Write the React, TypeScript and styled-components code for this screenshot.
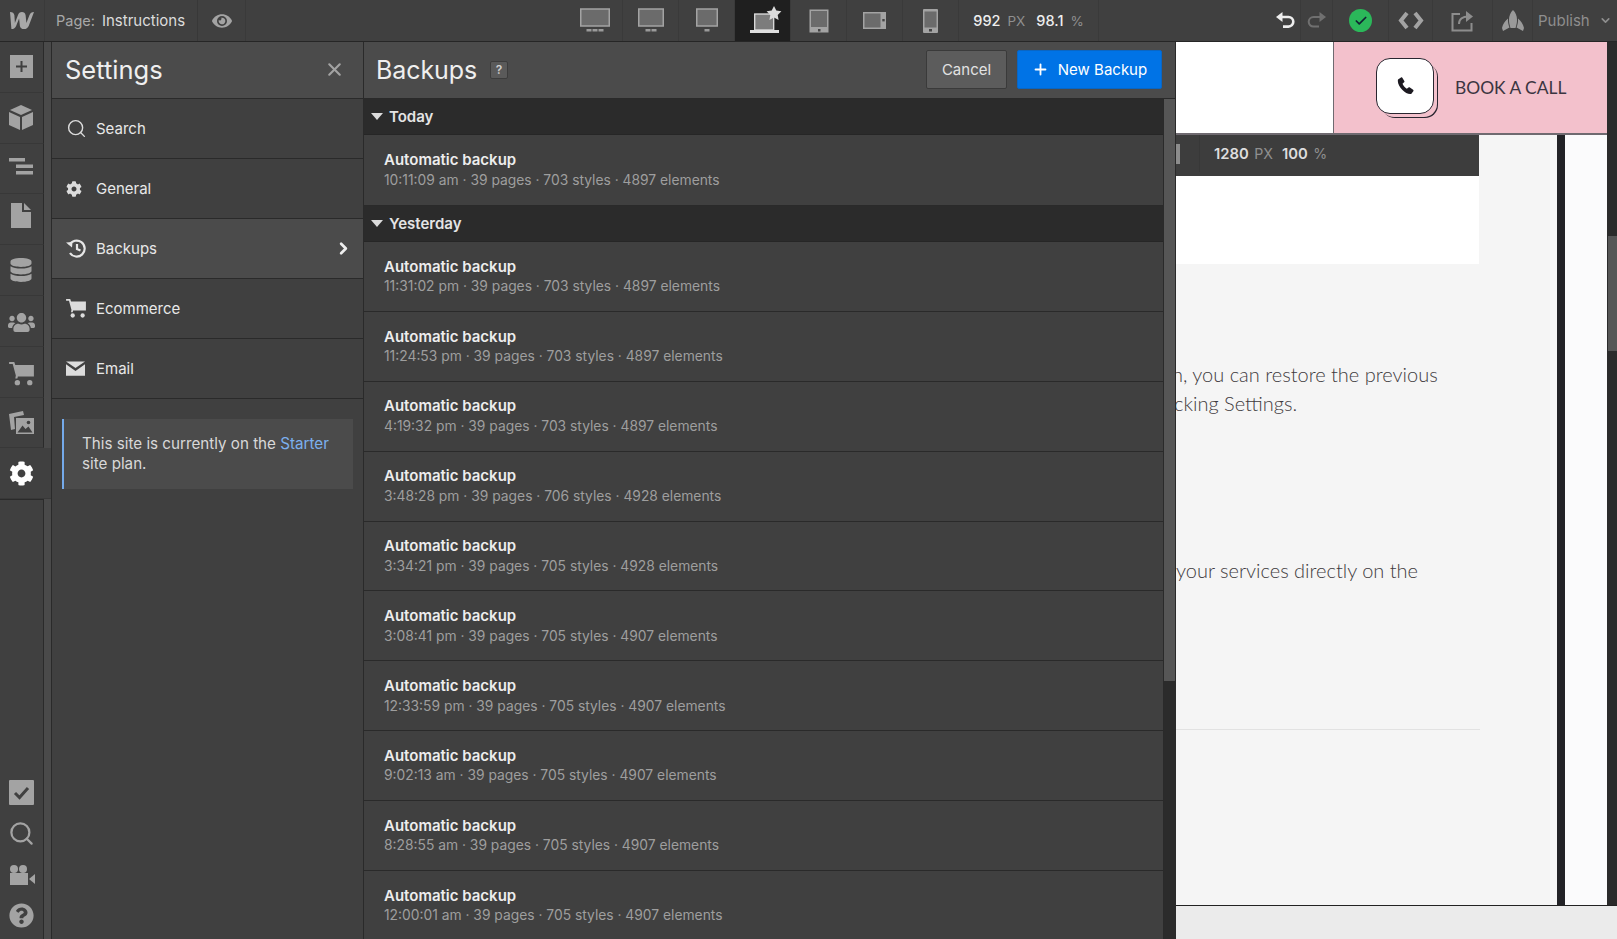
import React from 'react';
import styled, { createGlobalStyle } from 'styled-components';
import { FaCog, FaDatabase, FaEye, FaQuestionCircle, FaUsers } from 'react-icons/fa';
import { Check, X, ChevronRight, ChevronDown, Plus, Search } from 'lucide-react';

const GlobalStyle = createGlobalStyle`
  html, body { margin: 0; height: 100%; overflow: hidden; background: #404040; }
  * { box-sizing: border-box; }
  body { font-family: Inter, "Noto Sans", "Liberation Sans", sans-serif; }
`;

const gray = '#a3a3a3';

const Screen = styled.div`
  display: flex;
  flex-direction: column;
  width: 1617px;
  height: 939px;
  overflow: hidden;
  background: #404040;
  color: #e6e6e6;
`;

/* top bar */
const TopBar = styled.header`
  display: flex;
  align-items: stretch;
  height: 42px;
  flex: none;
  background: #404040;
  border-bottom: 1px solid #262626;
`;

const LogoCell = styled.div`
  width: 45px;
  flex: none;
  display: flex;
  align-items: center;
  justify-content: center;
  padding-right: 2px;
  border-right: 1px solid #3a3a3a;
`;

const PageCrumb = styled.div`
  width: 153px;
  flex: none;
  display: flex;
  align-items: center;
  gap: 7px;
  padding-left: 11px;
  font-size: 14.5px;
  color: #a8a8a8;
  border-right: 1px solid #383838;
  b { font-weight: 400; font-size: 15px; color: #dcdcdc; }
`;

const BarCell = styled.div<{ $w: number; $active?: boolean; $ml?: number }>`
  width: ${(p) => p.$w}px;
  margin-left: ${(p) => p.$ml ?? 0}px;
  flex: none;
  display: flex;
  align-items: center;
  justify-content: center;
  color: ${gray};
  background: ${(p) => (p.$active ? '#1f1f1f' : 'transparent')};
  border-right: 1px solid #3a3a3a;
`;

const Readout = styled.div`
  display: flex;
  align-items: center;
  gap: 7px;
  font-size: 14.5px;
  font-weight: 500;
  color: #eee;
  white-space: nowrap;
  span { font-size: 13.5px; color: #8f8f8f; font-weight: 400; margin-right: 4px; }
  span:last-child { margin-right: 0; }
`;

const PublishCell = styled.div`
  flex: none;
  display: flex;
  align-items: center;
  gap: 9px;
  padding-left: 5px;
  font-size: 15px;
  color: #8e8e8e;
`;

const SavedDot = styled.div`
  width: 23px;
  height: 23px;
  border-radius: 50%;
  background: #2bb85a;
  display: flex;
  align-items: center;
  justify-content: center;
  color: #123;
`;

/* body */
const Workspace = styled.div`
  flex: 1;
  min-height: 0;
  display: flex;
`;

const Rail = styled.nav`
  width: 52px;
  flex: none;
  display: flex;
  flex-direction: column;
  justify-content: space-between;
  background: #4a4a4a;
  border-right: 1px solid #2a2a2a;
`;

const RailGroup = styled.div`
  display: flex;
  flex-direction: column;
`;

const RailCell = styled.div<{ $active?: boolean; $up?: number; $down?: number }>`
  height: 50.8px;
  display: flex;
  align-items: center;
  justify-content: center;
  width: ${(p) => (p.$active ? 51 : 44)}px;
  padding-right: ${(p) => (p.$active ? 8 : 1)}px;
  padding-bottom: ${(p) => p.$up ?? 0}px;
  padding-top: ${(p) => p.$down ?? 0}px;
  color: ${(p) => (p.$active ? '#fff' : gray)};
  background: #404040;
  border-right: ${(p) => (p.$active ? 'none' : '1px solid #2a2a2a')};
  border-bottom: 1px solid #383838;
`;

const RailFoot = styled(RailCell)`
  height: 41px;
  border-bottom: none;
`;

const RailFiller = styled.div`
  flex: 1;
  width: 44px;
  background: #404040;
  border-right: 1px solid #2a2a2a;
  border-top: 1px solid #2a2a2a;
`;

const RailColumn = styled(RailGroup)`
  flex: 1;
`;

const RailBottom = styled(RailGroup)`
  width: 44px;
  padding-bottom: 3px;
  background: #404040;
  border-right: 1px solid #2a2a2a;
`;

/* settings */
const SettingsPanel = styled.aside`
  width: 312px;
  flex: none;
  background: #404040;
  border-right: 1px solid #2a2a2a;
`;

const PanelHead = styled.div`
  height: 57px;
  display: flex;
  align-items: center;
  justify-content: space-between;
  background: #4b4b4b;
  border-bottom: 1px solid #2a2a2a;
`;

const SettingsHead = styled(PanelHead)`
  padding: 0 18px 1px 13px;
  color: ${gray};
`;

const Title = styled.h1`
  margin: 0;
  font-size: 25.5px;
  font-weight: 400;
  color: #efefef;
`;

const BackupsTitle = styled(Title)`
  font-size: 25px;
  letter-spacing: -0.1px;
`;

const MenuRow = styled.div<{ $active?: boolean }>`
  height: 60px;
  display: flex;
  align-items: center;
  padding: 0 10px 0 13px;
  font-size: 15px;
  color: #e8e8e8;
  background: ${(p) => (p.$active ? '#4b4b4b' : '#404040')};
  border-bottom: 1px solid #2a2a2a;
`;

const MenuIcon = styled.div`
  width: 31px;
  flex: none;
  display: flex;
  align-items: center;
  padding-left: 1px;
  color: #dcdcdc;
`;

const MenuLabel = styled.span`
  flex: 1;
`;

const PlanNote = styled.div`
  margin: 20px 10px 0;
  height: 70px;
  padding: 15px 6px 0 18px;
  font-size: 15.2px;
  line-height: 20px;
  color: #d8d8d8;
  background: #4b4b4b;
  border-left: 2px solid #75aaea;
  a { color: #7cb0ef; }
`;

/* backups */
const BackupsPanel = styled.main`
  width: 812px;
  flex: none;
  display: flex;
  flex-direction: column;
  min-height: 0;
  background: #404040;
  border-right: 1px solid #2a2a2a;
`;

const BackupsHead = styled(PanelHead)`
  flex: none;
  padding: 0 13px 1px 12px;
`;

const HeadLeft = styled.div`
  display: flex;
  align-items: center;
  gap: 13px;
`;

const HelpBadge = styled.span`
  width: 18px;
  height: 18px;
  display: flex;
  align-items: center;
  justify-content: center;
  font-size: 12px;
  font-weight: 600;
  color: #d0d0d0;
  background: #5a5a5a;
  border: 1px solid #3c3c3c;
  border-radius: 2px;
`;

const HeadButtons = styled.div`
  display: flex;
  gap: 10px;
`;

const Button = styled.button<{ $primary?: boolean }>`
  height: 39px;
  display: flex;
  align-items: center;
  justify-content: center;
  gap: 9px;
  width: ${(p) => (p.$primary ? 145 : 81)}px;
  padding: 0;
  font: inherit;
  font-size: 15px;
  color: ${(p) => (p.$primary ? '#fff' : '#e2e2e2')};
  background: ${(p) => (p.$primary ? '#0073e6' : '#5c5c5c')};
  border: 1px solid ${(p) => (p.$primary ? '#0a66c4' : '#3a3a3a')};
  border-radius: 2px;
`;

const ListArea = styled.div`
  flex: 1;
  min-height: 0;
  display: flex;
  overflow: hidden;
`;

const BackupList = styled.div`
  flex: 1;
  min-width: 0;
`;

const DayHead = styled.div`
  height: 36px;
  display: flex;
  align-items: center;
  gap: 6px;
  padding: 0 0 1px 7px;
  font-size: 15px;
  font-weight: 600;
  color: #e4e4e4;
  background: #2b2b2b;
  border-bottom: 1px solid #262626;
`;

const Caret = styled.i`
  width: 0;
  height: 0;
  border-left: 6px solid transparent;
  border-right: 6px solid transparent;
  border-top: 7px solid #dcdcdc;
`;

const BackupRow = styled.div<{ $first?: boolean }>`
  height: ${(p) => (p.$first ? 71 : 69.9)}px;
  display: flex;
  flex-direction: column;
  justify-content: center;
  gap: 3.5px;
  padding-left: 20px;
  border-bottom: 1px solid #2a2a2a;
`;

const BackupTitle = styled.div`
  font-size: 15px;
  line-height: 17px;
  font-weight: 600;
  color: #ededed;
`;

const BackupMeta = styled.div`
  font-size: 13.83px;
  line-height: 17px;
  color: #9e9e9e;
`;

const ListScroll = styled.div`
  width: 12px;
  flex: none;
  background: #2b2b2b;
  border-left: 1px solid #2a2a2a;
`;

const ListThumb = styled.div`
  height: 582px;
  background: #565656;
`;

/* canvas */
const Canvas = styled.section`
  flex: 1;
  min-width: 0;
  display: flex;
  flex-direction: column;
  overflow: hidden;
  background: #ebebeb;
`;

const CanvasTop = styled.div`
  height: 864px;
  flex: none;
  display: flex;
  border-bottom: 1px solid #222;
`;

const SitePage = styled.div`
  flex: 1;
  min-width: 0;
  display: flex;
  flex-direction: column;
  background: #fff;
`;

const SiteHeader = styled.div`
  height: 93px;
  flex: none;
  display: flex;
  justify-content: flex-end;
  border-bottom: 2px solid #6f6a70;
`;

const CallBox = styled.div`
  width: 274px;
  display: flex;
  align-items: center;
  gap: 21px;
  padding-left: 42px;
  background: #f3c1cc;
  border-left: 1px solid #6f6a70;
`;

const PhoneTile = styled.div`
  width: 58px;
  height: 56px;
  flex: none;
  margin-bottom: 3px;
  display: flex;
  align-items: center;
  justify-content: center;
  background: #fff;
  border: 1px solid #2a2630;
  border-radius: 14px;
  box-shadow: 4px 4px 0 -1px #f3c1cc, 5px 5px 0 -1px #2a2630;
`;

const CallText = styled.span`
  font-family: Lato, "Open Sans", sans-serif;
  font-size: 17.4px;
  color: #3b3541;
`;

const SiteBody = styled.div`
  flex: 1;
  min-height: 0;
  display: flex;
`;

const SiteContent = styled.div`
  width: 381px;
  flex: none;
  overflow: hidden;
  background: #f5f5f5;
`;

const NestedBar = styled.div`
  width: 303px;
  height: 41px;
  display: flex;
  align-items: center;
  padding-bottom: 4px;
  background: #3d3d3d;
`;

const NestedEdge = styled.div`
  width: 24px;
  height: 100%;
  flex: none;
  display: flex;
  align-items: center;
  border-right: 1px solid #383838;
  i { width: 4px; height: 20px; background: #8c8c8c; }
`;

const NestedReadout = styled(Readout)`
  padding-left: 14px;
  font-size: 14.8px;
  font-weight: 600;
  color: #ddd;
  gap: 5.5px;
  span { font-size: 14.2px; margin-right: 3.5px; }
`;

const NestedWhite = styled.div`
  width: 303px;
  height: 88px;
  background: #fff;
`;

const BodyLine = styled.p<{ $mt?: number; $ml?: number }>`
  margin: ${(p) => p.$mt ?? 0}px 0 0 ${(p) => p.$ml ?? 0}px;
  font-family: Lato, "Open Sans", sans-serif;
  font-size: 20px;
  font-weight: 300;
  line-height: 29px;
  white-space: nowrap;
  color: #3f3b40;
`;

const SiteRule = styled.div`
  width: 304px;
  height: 1px;
  margin-top: 144px;
  background: #e2e2e2;
`;

const SiteStripe = styled.div`
  width: 8px;
  flex: none;
  background: #222226;
`;

const SiteMargin = styled.div`
  flex: 1;
  background: #fbfbfc;
`;

const PageScroll = styled.div`
  width: 10px;
  flex: none;
  padding-left: 1px;
  background: #2b2b2b;
`;

const PageThumb = styled.div`
  height: 115px;
  margin-top: 194px;
  background: #565656;
`;

const CanvasFoot = styled.div`
  flex: 1;
  background: #ebebeb;
`;

/* drawings */
const Logo = () => (
  <svg width="26" height="19" viewBox="0 0 26 19" fill="#a8a8a8">
    <path d="M26 1c-2.400 0-3.700 1.200-4.500 3l-3.100 8-.8-7.800C17.300 2 15.800 1 14 1c-2.200 0-3.300 1.300-4 3.100L6.900 12 6.400 4.300C6.200 2.200 4.500 1 2 1l1.400 17c2.500 0 3.900-1.200 4.700-3.100l3-7.300.8 7.300C12.100 17 13.800 18 16 18c2.400 0 3.700-1.100 4.700-3.100L26 1Z" />
  </svg>
);

const Monitor = ({ dots }: { dots: number }) => {
  const w = dots === 3 ? 30 : dots === 2 ? 26 : 22;
  const x = (30 - w) / 2;
  return (
    <svg width="30" height="25" viewBox="0 0 30 25">
      <rect x={x + 0.75} y="1" width={w - 1.5} height="17" fill="#6b6b6b" stroke="#a3a3a3" strokeWidth="1.500" />
      {Array.from({ length: dots }).map((_, i) => (
        <rect key={i} x={15 - (dots * 6 - 1) / 2 + i * 6} y="21" width="5" height="2.500" fill="#9a9a9a" />
      ))}
    </svg>
  );
};

const LaptopStar = () => (
  <svg width="32" height="30" viewBox="0 0 32 30" style={{ marginLeft: 6 }}>
    <rect x="4.700" y="8" width="19" height="16" fill="#7c7c7c" stroke="#e0e0e0" strokeWidth="1.300" />
    <rect x="0" y="24" width="29" height="3" fill="#e0e0e0" />
    <path d="M24 0l2.300 4.600 5.100.7-3.700 3.600.9 5.100-4.600-2.400-4.600 2.400.9-5.100-3.700-3.600 5.100-.7z" fill="#dcdcdc" />
  </svg>
);

const Tablet = () => (
  <svg width="20" height="24" viewBox="0 0 20 24">
    <rect x="0.500" y="0.500" width="19" height="23" fill="#a3a3a3" />
    <rect x="2" y="2" width="16" height="16" fill="#6b6b6b" />
    <rect x="9" y="20" width="2.500" height="2.500" fill="#444" />
  </svg>
);

const TabletWide = () => (
  <svg width="23" height="17" viewBox="0 0 23 17">
    <rect x="0" y="0" width="23" height="17" fill="#a3a3a3" />
    <rect x="1.500" y="1.500" width="16" height="14" fill="#6b6b6b" />
    <rect x="19.300" y="7" width="2.400" height="2.400" fill="#444" />
  </svg>
);

const PhoneDevice = () => (
  <svg width="15" height="24" viewBox="0 0 15 24">
    <rect x="0" y="0" width="15" height="24" rx="1" fill="#a3a3a3" />
    <rect x="1.500" y="2.500" width="12" height="16" fill="#6b6b6b" />
    <rect x="6" y="20" width="3" height="2.500" fill="#444" />
  </svg>
);

const AddBox = () => (
  <svg width="23" height="23" viewBox="0 0 23 23">
    <rect width="23" height="23" fill="#a3a3a3" />
    <path d="M11.500 6v11M6 11.500h11" stroke="#404040" strokeWidth="2" />
  </svg>
);

const Cube = () => (
  <svg width="24" height="25" viewBox="0 0 24 25" fill="#a3a3a3">
    <path d="M12 0l11 5-11 5L1 5z" />
    <path d="M0 7l11 5v13L0 20z" />
    <path d="M24 7l-11 5v13l11-5z" />
  </svg>
);

const Navigator = () => (
  <svg width="24" height="17" viewBox="0 0 24 17" fill="#a3a3a3">
    <rect x="0" y="0" width="16" height="3.500" />
    <rect x="7" y="6.500" width="17" height="3.500" />
    <rect x="7" y="13" width="17" height="3.500" />
  </svg>
);

const PageDoc = () => (
  <svg width="20" height="25" viewBox="0 0 20 25" fill="#a3a3a3">
    <path d="M0 0h11v9h9v16H0z" />
    <path d="M13 0l7 7h-7z" />
  </svg>
);

const Cart = ({ w, fill }: { w: number; fill: string }) => (
  <svg width={w} height={w * 0.95} viewBox="0 0 24 23" fill={fill}>
    <path d="M0 0h5l1 3h18v11H8.500l-.5 2H6l.5-3L3.500 2H0z" />
    <circle cx="8" cy="20" r="2.600" />
    <circle cx="20" cy="20" r="2.600" />
  </svg>
);

const Assets = () => (
  <svg width="25" height="23" viewBox="0 0 25 23">
    <path d="M0 3l14-3 1 4-10 2 1 12-4 1z" fill="#a3a3a3" />
    <rect x="7" y="7" width="18" height="16" fill="#a3a3a3" />
    <path d="M8.500 21.500l5-7 3 3.500 3-2.500 4 6z" fill="#404040" />
    <circle cx="19.500" cy="11.500" r="1.800" fill="#404040" />
  </svg>
);

const TaskBox = () => (
  <svg width="25" height="25" viewBox="0 0 25 25">
    <rect width="25" height="25" rx="1" fill="#a3a3a3" />
    <path d="M6 13l4.500 4.500L19 8" fill="none" stroke="#404040" strokeWidth="3" />
  </svg>
);

const Video = () => (
  <svg width="26" height="20" viewBox="0 0 26 20" fill="#a3a3a3" style={{ marginLeft: 2 }}>
    <circle cx="5" cy="4" r="4" />
    <circle cx="14" cy="4" r="4" />
    <rect x="1" y="8" width="18" height="12" />
    <path d="M20 14l6-5v10z" />
  </svg>
);

const Code = () => (
  <svg width="26" height="19" viewBox="0 0 26 19" fill="none" stroke="#a3a3a3" strokeWidth="4">
    <path d="M9 2L3 9.500 9 17M17 2l6 7.500L17 17" />
  </svg>
);

const ShareBox = () => (
  <svg width="24" height="22" viewBox="0 0 24 22" fill="none" stroke="#8d8d8d" strokeWidth="2">
    <path d="M9 4H1.500v16.500h19V13" />
    <path d="M8 14c0-5 4-7.500 9-7.500" />
    <path d="M15 1l7 5.500-7 5.500z" fill="#8d8d8d" stroke="none" />
  </svg>
);

const Rocket = () => (
  <svg width="22" height="21" viewBox="0 0 22 21" fill="#9a9a9a">
    <path d="M11 0c2.600 2.500 4 6 4 9.500 0 3-.5 5.500-1.500 8.500h-5C7.500 15 7 12.500 7 9.500 7 6 8.400 2.500 11 0z" />
    <path d="M6 8.500C3 11 .8 14 0 18l1 3 6.500-3.500C6.300 14.500 5.800 11.500 6 8.500zM16 8.500c3 2.500 5.200 5.500 6 9.500l-1 3-6.500-3.500c1.200-3 1.700-6 1.500-9z" />
  </svg>
);

const UndoArrow = ({ flip, color, sw }: { flip?: boolean; color: string; sw: number }) => (
  <svg width="19" height="18" viewBox="0 0 19 18" fill="none" stroke={color} strokeWidth={sw} style={flip ? { transform: 'scaleX(-1)' } : undefined}>
    <path d="M6 5h6.500a4.800 4.800 0 0 1 0 9.600H7" />
    <path d="M0 5l6.500-5v10z" fill={color} stroke="none" />
  </svg>
);

const History = () => (
  <svg width="20" height="19" viewBox="0 0 20 19" fill="none" stroke="#e6e6e6" strokeWidth="2.200">
    <path d="M3.500 6A8 8 0 1 1 4 14" />
    <path d="M0 3.500l6.500-.5-.5 5.500z" fill="#e6e6e6" stroke="none" />
    <path d="M11 5v5l3.500 1.500" />
  </svg>
);

const Mail = () => (
  <svg width="19" height="15" viewBox="0 0 20 15" fill="#dcdcdc">
    <path d="M0 0h20L10 7z" />
    <path d="M0 3l10 7 10-7v12H0z" />
  </svg>
);

const PhoneGlyph = () => (
  <svg width="17" height="18" viewBox="0 0 17 18" fill="#1d1a21">
    <path d="M1 2.500L4 .5c.6-.3 1.200-.2 1.500.4l1.800 3c.3.500.2 1-.2 1.400L5.500 6.800c.5 1.500 2.600 4.200 4.300 5l1.700-1.300c.5-.3 1-.3 1.400.1l3.200 2.200c.5.4.6 1 .2 1.500l-2.100 2.700c-5 1.300-14.800-8-13.200-14.500z" />
  </svg>
);

const days = [
  {
    label: 'Today',
    rows: ['10:11:09 am · 39 pages · 703 styles · 4897 elements'],
  },
  {
    label: 'Yesterday',
    rows: [
      '11:31:02 pm · 39 pages · 703 styles · 4897 elements',
      '11:24:53 pm · 39 pages · 703 styles · 4897 elements',
      '4:19:32 pm · 39 pages · 703 styles · 4897 elements',
      '3:48:28 pm · 39 pages · 706 styles · 4928 elements',
      '3:34:21 pm · 39 pages · 705 styles · 4928 elements',
      '3:08:41 pm · 39 pages · 705 styles · 4907 elements',
      '12:33:59 pm · 39 pages · 705 styles · 4907 elements',
      '9:02:13 am · 39 pages · 705 styles · 4907 elements',
      '8:28:55 am · 39 pages · 705 styles · 4907 elements',
      '12:00:01 am · 39 pages · 705 styles · 4907 elements',
    ],
  },
];

const menu = [
  { label: 'Search', icon: <Search size={21} strokeWidth={1.6} /> },
  { label: 'General', icon: <FaCog size={16} /> },
  { label: 'Backups', icon: <History />, active: true },
  { label: 'Ecommerce', icon: <Cart w={20} fill="#dcdcdc" /> },
  { label: 'Email', icon: <Mail /> },
];

export default function App() {
  return (
    <Screen>
      <GlobalStyle />
      <TopBar>
        <LogoCell><Logo /></LogoCell>
        <PageCrumb>Page: <b>Instructions</b></PageCrumb>
        <BarCell $w={48}><FaEye size={20} /></BarCell>
        <BarCell $w={56} $ml={321}><Monitor dots={3} /></BarCell>
        <BarCell $w={56}><Monitor dots={2} /></BarCell>
        <BarCell $w={56}><Monitor dots={1} /></BarCell>
        <BarCell $w={56} $active><LaptopStar /></BarCell>
        <BarCell $w={56}><Tablet /></BarCell>
        <BarCell $w={56}><TabletWide /></BarCell>
        <BarCell $w={56}><PhoneDevice /></BarCell>
        <BarCell $w={140}>
          <Readout>992 <span>PX</span> 98.1 <span>%</span></Readout>
        </BarCell>
        <BarCell $w={30} $ml={172}><UndoArrow color="#eee" sw={2.6} /></BarCell>
        <BarCell $w={32}><UndoArrow flip color="#707070" sw={2} /></BarCell>
        <BarCell $w={56}><SavedDot><Check size={14} strokeWidth={3} /></SavedDot></BarCell>
        <BarCell $w={44}><Code /></BarCell>
        <BarCell $w={60}><ShareBox /></BarCell>
        <BarCell $w={40}><Rocket /></BarCell>
        <PublishCell>Publish <ChevronDown size={13} strokeWidth={3} /></PublishCell>
      </TopBar>

      <Workspace>
        <Rail>
          <RailColumn>
            <RailCell><AddBox /></RailCell>
            <RailCell><Cube /></RailCell>
            <RailCell $up={4}><Navigator /></RailCell>
            <RailCell $up={8}><PageDoc /></RailCell>
            <RailCell><FaDatabase size={24} /></RailCell>
            <RailCell $down={4}><FaUsers size={27} /></RailCell>
            <RailCell $down={4}><Cart w={25} fill={gray} /></RailCell>
            <RailCell><Assets /></RailCell>
            <RailCell $active><FaCog size={25} /></RailCell>
            <RailFiller />
          </RailColumn>
          <RailBottom>
            <RailFoot><TaskBox /></RailFoot>
            <RailFoot><Search size={27} strokeWidth={2} /></RailFoot>
            <RailFoot><Video /></RailFoot>
            <RailFoot><FaQuestionCircle size={25} /></RailFoot>
          </RailBottom>
        </Rail>

        <SettingsPanel>
          <SettingsHead>
            <Title>Settings</Title>
            <X size={21} strokeWidth={2.4} />
          </SettingsHead>
          {menu.map((m) => (
            <MenuRow key={m.label} $active={m.active}>
              <MenuIcon>{m.icon}</MenuIcon>
              <MenuLabel>{m.label}</MenuLabel>
              {m.active && <ChevronRight size={19} strokeWidth={3.4} color="#eee" />}
            </MenuRow>
          ))}
          <PlanNote>
            This site is currently on the <a>Starter</a> site plan.
          </PlanNote>
        </SettingsPanel>

        <BackupsPanel>
          <BackupsHead>
            <HeadLeft>
              <BackupsTitle>Backups</BackupsTitle>
              <HelpBadge>?</HelpBadge>
            </HeadLeft>
            <HeadButtons>
              <Button>Cancel</Button>
              <Button $primary><Plus size={17} strokeWidth={2.6} /> New Backup</Button>
            </HeadButtons>
          </BackupsHead>
          <ListArea>
            <BackupList>
              {days.map((d, i) => (
                <React.Fragment key={d.label}>
                  <DayHead><Caret /> {d.label}</DayHead>
                  {d.rows.map((r) => (
                    <BackupRow key={r} $first={i === 0}>
                      <BackupTitle>Automatic backup</BackupTitle>
                      <BackupMeta>{r}</BackupMeta>
                    </BackupRow>
                  ))}
                </React.Fragment>
              ))}
            </BackupList>
            <ListScroll><ListThumb /></ListScroll>
          </ListArea>
        </BackupsPanel>

        <Canvas>
          <CanvasTop>
            <SitePage>
              <SiteHeader>
                <CallBox>
                  <PhoneTile><PhoneGlyph /></PhoneTile>
                  <CallText>BOOK A CALL</CallText>
                </CallBox>
              </SiteHeader>
              <SiteBody>
                <SiteContent>
                  <NestedBar>
                    <NestedEdge><i /></NestedEdge>
                    <NestedReadout>1280 <span>PX</span> 100 <span>%</span></NestedReadout>
                  </NestedBar>
                  <NestedWhite />
                  <BodyLine $mt={96} $ml={-4}>n, you can restore the previous</BodyLine>
                  <BodyLine $ml={-2}>cking Settings.</BodyLine>
                  <BodyLine $mt={138}>your services directly on the</BodyLine>
                  <SiteRule />
                </SiteContent>
                <SiteStripe />
                <SiteMargin />
              </SiteBody>
            </SitePage>
            <PageScroll><PageThumb /></PageScroll>
          </CanvasTop>
          <CanvasFoot />
        </Canvas>
      </Workspace>
    </Screen>
  );
}
